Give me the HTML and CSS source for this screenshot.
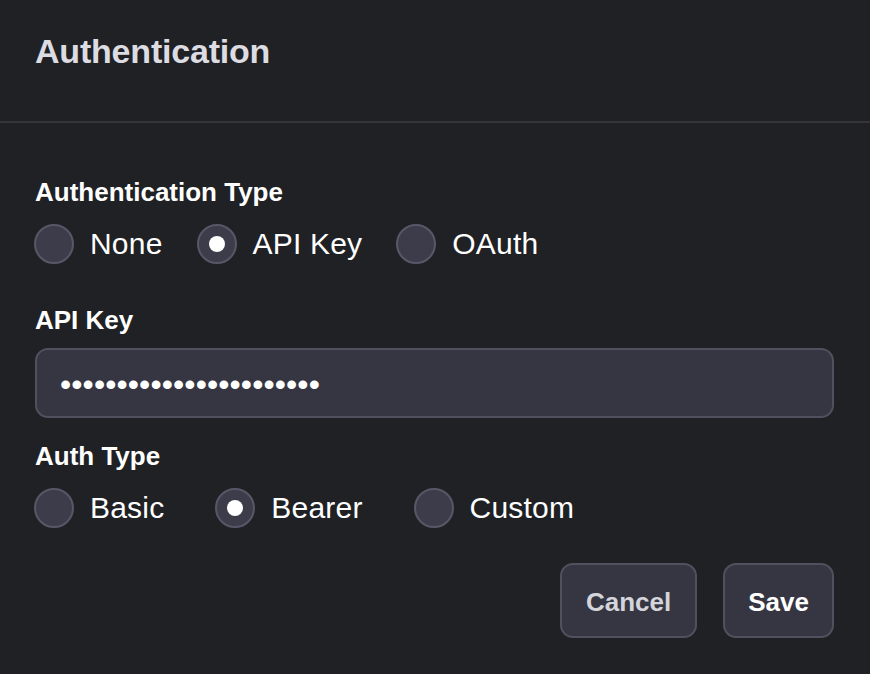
FILE: index.html
```html
<!DOCTYPE html>
<html lang="en">
<head>
<meta charset="utf-8">
<title>Authentication</title>
<link rel="stylesheet" href="styles.css">
</head>
<body>
<div class="dialog">
  <header class="dialog-header">
    <h1 class="dialog-title">Authentication</h1>
  </header>
  <div class="dialog-body">
    <div class="field-label label-auth-type">Authentication Type</div>
    <div class="radio-group group-top">
      <label class="radio-option"><span class="radio"></span><span class="radio-text">None</span></label>
      <label class="radio-option"><span class="radio checked"></span><span class="radio-text">API Key</span></label>
      <label class="radio-option"><span class="radio"></span><span class="radio-text">OAuth</span></label>
    </div>
    <div class="field-label label-api-key">API Key</div>
    <input class="text-input" type="password" value="abcdefghijklmnopqrstuvw" readonly>
    <div class="field-label label-auth">Auth Type</div>
    <div class="radio-group group-bottom">
      <label class="radio-option"><span class="radio"></span><span class="radio-text">Basic</span></label>
      <label class="radio-option"><span class="radio checked"></span><span class="radio-text">Bearer</span></label>
      <label class="radio-option"><span class="radio"></span><span class="radio-text">Custom</span></label>
    </div>
    <div class="actions">
      <button class="btn btn-cancel" type="button">Cancel</button>
      <button class="btn btn-save" type="button">Save</button>
    </div>
  </div>
</div>
</body>
</html>
```
FILE: styles.css
```css
* { box-sizing: border-box; }
html, body {
  margin: 0;
  padding: 0;
  background: #202124;
}
body {
  font-family: "Liberation Sans", Arial, sans-serif;
  color: #ffffff;
  width: 870px;
  height: 674px;
  overflow: hidden;
}
.dialog-header {
  height: 123px;
  padding: 31px 35px 0;
  border-bottom: 2px solid #353538;
}
.dialog-title {
  margin: 0;
  font-size: 34px;
  line-height: 40px;
  font-weight: 700;
  color: #dcdce2;
  letter-spacing: -0.2px;
}
.dialog-body {
  padding: 0 36px 0 34px;
  display: flex;
  flex-direction: column;
}
.field-label {
  font-size: 26px;
  line-height: 32px;
  font-weight: 700;
  color: #ffffff;
  padding-left: 1px;
}
.label-auth-type { margin-top: 53px; }
.label-api-key { margin-top: 40px; }
.label-auth { margin-top: 22px; }
.radio-group {
  display: flex;
  align-items: center;
  margin-top: 16px;
  height: 40px;
}
.group-top { gap: 34px; }
.group-bottom { gap: 51px; }
.radio-option {
  display: flex;
  align-items: center;
  gap: 16px;
}
.radio {
  width: 40px;
  height: 40px;
  border-radius: 50%;
  background: #3c3c4a;
  border: 2px solid #575767;
  display: flex;
  align-items: center;
  justify-content: center;
}
.radio.checked::after {
  content: "";
  width: 16px;
  height: 16px;
  border-radius: 50%;
  background: #ffffff;
}
.radio-text {
  font-size: 30px;
  line-height: 36px;
  color: #ffffff;
  letter-spacing: 0.2px;
}
.text-input {
  margin-top: 12px;
  margin-left: 1px;
  height: 70px;
  width: calc(100% - 1px);
  background: #363642;
  border: 2px solid #52505e;
  border-radius: 13px;
  padding: 2px 23px 0;
  color: #ffffff;
  font-family: "Liberation Sans", Arial, sans-serif;
  font-size: 32px;
  letter-spacing: 0.1px;
  outline: none;
}
.actions {
  display: flex;
  justify-content: flex-end;
  gap: 26px;
  margin-top: 35px;
}
.btn {
  height: 75px;
  padding: 3px 23px 0;
  border-radius: 13px;
  background: #363642;
  border: 2px solid #52505e;
  font-family: "Liberation Sans", Arial, sans-serif;
  font-size: 26px;
  font-weight: 700;
}
.btn-cancel { color: #d4d4dc; padding: 3px 24px 0; }
.btn-save { color: #ffffff; }
```
